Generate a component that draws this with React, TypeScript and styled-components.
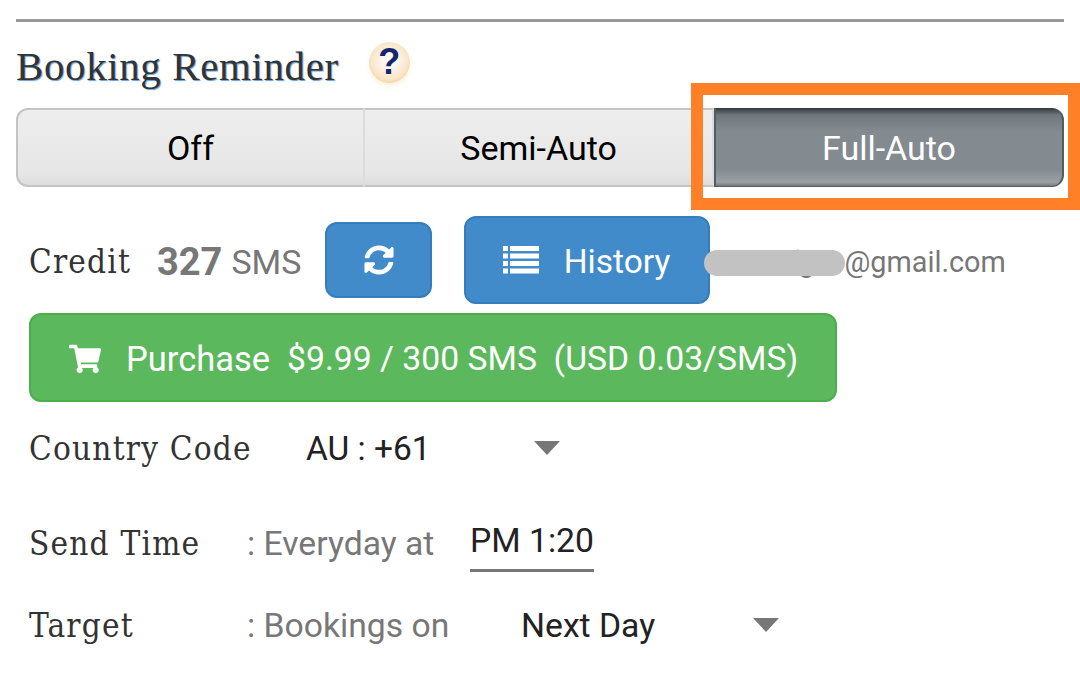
import styled, { createGlobalStyle } from "styled-components";
import { FaShoppingCart, FaSyncAlt } from "react-icons/fa";

const GlobalStyle = createGlobalStyle`
  html, body {
    margin: 0;
    padding: 0;
    background: #fff;
    overflow: hidden;
  }
`;

const ListIcon = () => (
  <svg width="36" height="28" viewBox="0 0 36 28" fill="#fff">
    <path d="M0 0h5v5H0zM7 0h29v5H7zM0 7.5h5v5H0zM7 7.5h29v5H7zM0 15h5v5H0zM7 15h29v5H7zM0 22.500h5v5H0zM7 22.500h29v5H7z" />
  </svg>
);

export default function App() {
  return (
    <>
      <GlobalStyle />
      <Page>
        <Rule />
        <Heading>
          <Title>Booking Reminder</Title>
          <HelpBadge>?</HelpBadge>
        </Heading>
        <ModeSwitch>
          <ModeButton>Off</ModeButton>
          <ModeButton>Semi-Auto</ModeButton>
          <ModeButton $active>Full-Auto</ModeButton>
          <Highlight />
        </ModeSwitch>
        <CreditRow>
          <CreditLabel>Credit</CreditLabel>
          <CreditCount>327</CreditCount>
          <CreditUnit>SMS</CreditUnit>
          <RefreshButton>
            <FaSyncAlt size={30} />
          </RefreshButton>
          <HistoryButton>
            <ListIcon />
            <HistoryText>History</HistoryText>
          </HistoryButton>
          <Email>
            <HiddenName>
              abcdefgh
              <Blur />
            </HiddenName>
            @gmail.com
          </Email>
        </CreditRow>
        <PurchaseButton>
          <FaShoppingCart size={32} />
          <span>Purchase</span>
          <PurchasePrice>$9.99 / 300 SMS&nbsp;&nbsp;(USD 0.03/SMS)</PurchasePrice>
        </PurchaseButton>
        <CountryRow>
          <FieldLabel>Country Code</FieldLabel>
          <CountryValue>AU : +61</CountryValue>
          <Caret />
        </CountryRow>
        <TimeRow>
          <FieldLabel $width={218}>Send Time</FieldLabel>
          <FieldHint $width={223}>: Everyday at</FieldHint>
          <TimeValue>PM 1:20</TimeValue>
        </TimeRow>
        <TargetRow>
          <FieldLabel $width={218}>Target</FieldLabel>
          <FieldHint $width={274}>: Bookings on</FieldHint>
          <TargetValue>Next Day</TargetValue>
          <Caret />
        </TargetRow>
      </Page>
    </>
  );
}

/* -------------------------------------------------------------------------- */
/*                                   STYLES                                   */
/* -------------------------------------------------------------------------- */

const Page = styled.div`
  width: 1048px;
  height: 680px;
  padding: 19px 16px 0;
  font-family: Roboto, "Liberation Sans", sans-serif;
  overflow: hidden;
`;

const Rule = styled.div`
  height: 3px;
  background: #999;
`;

const Heading = styled.div`
  height: 86px;
  display: flex;
  align-items: center;
  gap: 30px;
`;

const Title = styled.h2`
  margin: 0;
  font-family: "Liberation Serif", serif;
  font-size: 41px;
  font-weight: 400;
  letter-spacing: 0.6px;
  color: #333;
  text-shadow: 1px 1px 1px rgba(66, 139, 202, 0.85);
  position: relative;
  top: 1px;
`;

const HelpBadge = styled.div`
  width: 41px;
  height: 41px;
  border-radius: 50%;
  display: flex;
  align-items: center;
  justify-content: center;
  background: radial-gradient(circle at 50% 45%, #fdfaf4 15%, #f9e6cb 60%, #f0c078 95%);
  box-shadow: 0 4px 5px rgba(250, 225, 170, 0.35);
  font-family: "Liberation Sans", sans-serif;
  font-size: 36px;
  font-weight: 700;
  color: #14266e;
  position: relative;
  top: -3px;
`;

const ModeSwitch = styled.div`
  position: relative;
  height: 79px;
  display: grid;
  grid-template-columns: 349px 349px 350px;
`;

const ModeButton = styled.div<{ $active?: boolean }>`
  display: flex;
  align-items: center;
  justify-content: center;
  box-sizing: border-box;
  padding-top: 1px;
  font-size: 34px;
  color: ${(p) => (p.$active ? "#fff" : "#000")};
  background: ${(p) =>
    p.$active
      ? "linear-gradient(#33383c 0, #6f777c 9%, #838a90 30%, #838a90 78%, #9aa1a6 95%, #777 100%)"
      : "linear-gradient(#eeeeee, #e6e6e6 85%, #dddddd)"};
  border: solid ${(p) => (p.$active ? "#555b60" : "#c4c4c4")};
  border-width: ${(p) => (p.$active ? "0 1px 1px 2px" : "2px 0 2px 0")};
  border-right: ${(p) => (p.$active ? "2px solid #555b60" : "2px solid #dcdcdc")};

  &:first-child {
    border-left: 2px solid #c4c4c4;
    border-radius: 12px 0 0 12px;
  }
  &:nth-child(3) {
    border-radius: 0 12px 12px 0;
  }
`;

const Highlight = styled.div`
  position: absolute;
  left: 675px;
  top: -25px;
  width: 389px;
  height: 127px;
  box-sizing: border-box;
  border: 12px solid #ff8026;
  pointer-events: none;
`;

const CreditRow = styled.div`
  margin-top: 29px;
  padding-left: 13px;
  height: 88px;
  display: flex;
  align-items: center;
`;

const SlabLabel = styled.span`
  font-family: "DejaVu Serif", serif;
  font-stretch: condensed;
  font-size: 33px;
  letter-spacing: 1.2px;
  color: #333;
  display: inline-block;
  white-space: nowrap;
`;

const CreditLabel = styled(SlabLabel)`
  width: 128px;
  padding-top: 3px;
`;

const CreditCount = styled.span`
  font-size: 38px;
  font-weight: 700;
  color: #777;
  padding-top: 3px;
`;

const CreditUnit = styled.span`
  margin-left: 9px;
  font-size: 34px;
  color: #777;
  padding-top: 3px;
`;

const BlueButton = styled.div`
  box-sizing: border-box;
  display: flex;
  align-items: center;
  justify-content: center;
  background: #428bca;
  border: 2px solid #357ebd;
  border-radius: 12px;
  color: #fff;
`;

const RefreshButton = styled(BlueButton)`
  margin-left: 24px;
  width: 107px;
  height: 76px;
`;

const HistoryButton = styled(BlueButton)`
  margin-left: 32px;
  width: 246px;
  height: 88px;
  gap: 25px;
  font-size: 33.500px;
  padding-right: 2px;
`;

const HistoryText = styled.span`
  padding-top: 3px;
`;

const Email = styled.span`
  font-size: 28.800px;
  color: #777;
  white-space: nowrap;
  display: flex;
  align-items: center;
  padding-top: 3px;
`;

const HiddenName = styled.span`
  position: relative;
  display: inline-block;
  width: 134px;
  overflow: visible;
`;

const Blur = styled.span`
  position: absolute;
  left: -6px;
  top: 5px;
  width: 141px;
  height: 26px;
  border-radius: 13px;
  background: #c2c2c2;
`;

const PurchaseButton = styled.div`
  margin: 9px 0 0 13px;
  box-sizing: border-box;
  width: 808px;
  height: 89px;
  padding: 2px 0 0 38px;
  display: flex;
  align-items: center;
  gap: 25px;
  background: #5cb85c;
  border: 2px solid #4cae4c;
  border-radius: 12px;
  color: #fff;
  font-size: 34.500px;
  white-space: nowrap;
`;

const PurchasePrice = styled.span`
  margin-left: -8px;
  font-size: 33.700px;
`;

const FieldRow = styled.div`
  padding-left: 13px;
  display: flex;
  align-items: center;
`;

const CountryRow = styled(FieldRow)`
  margin-top: 18px;
  height: 56px;
`;

const TimeRow = styled(FieldRow)`
  margin-top: 39px;
  height: 56px;
`;

const TargetRow = styled(FieldRow)`
  margin-top: 26px;
  height: 56px;
`;

const FieldLabel = styled(SlabLabel)<{ $width?: number }>`
  width: ${(p) => p.$width ?? 277}px;
  flex: none;
`;

const FieldHint = styled.span<{ $width: number }>`
  width: ${(p) => p.$width}px;
  flex: none;
  font-size: 33.700px;
  color: #777;
`;

const CountryValue = styled.span`
  width: 228px;
  font-size: 33.500px;
  color: #222;
`;

const TimeValue = styled.span`
  box-sizing: border-box;
  height: 57px;
  line-height: 52px;
  font-size: 33.700px;
  color: #222;
  border-bottom: 3px solid #777;
`;

const TargetValue = styled.span`
  width: 232px;
  font-size: 33.700px;
  color: #222;
`;

const Caret = styled.span`
  width: 0;
  height: 0;
  border-left: 13px solid transparent;
  border-right: 13px solid transparent;
  border-top: 14px solid #777;
`;
